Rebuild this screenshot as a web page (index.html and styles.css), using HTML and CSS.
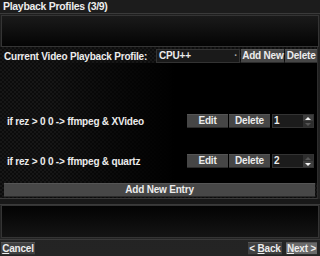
FILE: index.html
```html
<!DOCTYPE html>
<html lang="en">
<head>
    <meta charset="UTF-8">
    <title>Playback Profiles</title>
    <link rel="stylesheet" href="styles.css">
</head>
<body>
    <div class="screen">
        <div class="title">Playback Profiles (3/9)</div>
        <div class="panel"></div>

        <div class="main">
            <div class="profile-row">
                <span class="label">Current Video Playback Profile:</span>
                <div class="combo"><span>CPU++</span><span class="combo-dot">·</span></div>
                <button class="btn add-new">Add New</button>
                <button class="btn del-profile">Delete</button>
            </div>

            <div class="list">
                <div class="entry">
                    <span class="entry-text">if rez &gt; 0 0 -&gt; ffmpeg &amp; XVideo</span>
                    <button class="btn edit">Edit</button>
                    <button class="btn del">Delete</button>
                    <div class="spin">
                        <span class="spin-val">1</span>
                        <div class="arrows">
                            <span class="arrow up on"></span>
                            <span class="arrow down"></span>
                        </div>
                    </div>
                </div>
                <div class="entry">
                    <span class="entry-text">if rez &gt; 0 0 -&gt; ffmpeg &amp; quartz</span>
                    <button class="btn edit">Edit</button>
                    <button class="btn del">Delete</button>
                    <div class="spin">
                        <span class="spin-val">2</span>
                        <div class="arrows">
                            <span class="arrow up"></span>
                            <span class="arrow down on"></span>
                        </div>
                    </div>
                </div>
            </div>

            <button class="btn add-entry">Add New Entry</button>
        </div>

        <div class="spacer"></div>
        <div class="panel bottom"></div>

        <div class="footer">
            <button class="btn cancel"><u>C</u>ancel</button>
            <div class="nav">
                <button class="btn back">&lt; <u>B</u>ack</button>
                <button class="btn next"><u>N</u>ext &gt;</button>
            </div>
        </div>
    </div>
</body>
</html>
```

FILE: styles.css
```css
body {
    margin: 0;
    background-color: #1c1c1c;
    font-family: "Liberation Sans", Arial, sans-serif;
    font-weight: bold;
    font-size: 10px;
    letter-spacing: -0.2px;
    color: #ececec;
    white-space: nowrap;
}
.screen {
    width: 320px;
    height: 256px;
    overflow: hidden;
    display: flex;
    flex-direction: column;
    background: linear-gradient(#1e1e1e, #242424);
}
.title {
    height: 13px;
    line-height: 13px;
    font-size: 10.5px;
    letter-spacing: -0.3px;
    padding-left: 3px;
    border-bottom: 1px solid #3a3a3a;
    background-color: #1c1c1c;
}
.panel {
    height: 30px;
    margin: 1px 1px 0 1px;
    border: 1px solid #343434;
    background: linear-gradient(#1a1a1a, #040404);
}
.main {
    height: 151px;
    display: flex;
    flex-direction: column;
    border-bottom: 1px solid #3a3a3a;
    border-right: 1px solid #2e2e2e;
    margin-right: 2px;
    background-color: #0f0f0f;
    background-image: repeating-conic-gradient(#171717 0 25%, #0c0c0c 0 50%);
    background-size: 4px 4px;
}
.profile-row {
    display: flex;
    align-items: center;
    height: 14px;
    margin-top: 2px;
}
.label {
    width: 152px;
    flex-shrink: 0;
    padding-left: 4px;
}
.combo {
    width: 81px;
    height: 12px;
    line-height: 12px;
    border: 1px solid #333;
    background-color: #1a1a1a;
    display: flex;
    justify-content: space-between;
    padding-left: 2px;
    margin-right: 1px;
}
.combo-dot {
    color: #aaa;
    padding-right: 2px;
}
.btn {
    font-family: "Liberation Sans", Arial, sans-serif;
    font-weight: bold;
    font-size: 10px;
    letter-spacing: -0.2px;
    color: #ececec;
    background-color: #464646;
    border: none;
    border-top: 1px solid #555;
    border-bottom: 1px solid #2c2c2c;
    padding: 0;
    height: 14px;
    line-height: 12px;
    white-space: nowrap;
}
.add-new {
    width: 43px;
    margin-right: 1px;
}
.del-profile {
    width: 32px;
}
.list {
    flex: 1;
    display: flex;
    flex-direction: column;
    gap: 26px;
    padding-top: 51px;
    background: linear-gradient(to right, transparent 15%, #000 55%);
}
.entry {
    display: flex;
    align-items: center;
    height: 14px;
}
.entry-text {
    width: 180px;
    flex-shrink: 0;
    padding-left: 7px;
}
.edit {
    width: 41px;
    margin-right: 1px;
}
.del {
    width: 41px;
    margin-right: 2px;
}
.spin {
    width: 40px;
    height: 12px;
    border: 1px solid #333;
    background-color: #1c1c1c;
    display: flex;
    justify-content: space-between;
}
.spin-val {
    padding-left: 1px;
    line-height: 12px;
}
.arrows {
    width: 10px;
    display: flex;
    flex-direction: column;
}
.arrow {
    height: 6px;
    display: flex;
    justify-content: center;
    align-items: center;
    background-color: #2e2e2e;
}
.arrow::before {
    content: "";
    border-left: 3px solid transparent;
    border-right: 3px solid transparent;
}
.arrow.up::before {
    border-bottom: 3px solid #555;
}
.arrow.down::before {
    border-top: 3px solid #555;
}
.arrow.on {
    background-color: #3e3e3e;
}
.arrow.up.on::before {
    border-bottom-color: #f4f4f4;
}
.arrow.down.on::before {
    border-top-color: #f4f4f4;
}
.add-entry {
    margin: 0 2px 1px 4px;
    background-color: #474747;
}
.spacer {
    height: 5px;
    border-bottom: 1px solid #3a3a3a;
    background-color: #181818;
}
.panel.bottom {
    margin-top: 0;
    height: 31px;
    background: linear-gradient(#030303, #141414);
}
.footer {
    flex: 1;
    display: flex;
    justify-content: space-between;
    align-items: center;
    border-top: 1px solid #3a3a3a;
    margin-top: 1px;
    padding: 0 3px 0 1px;
}
.footer .btn {
    height: 13px;
    background-color: #404040;
}
.cancel {
    width: 34px;
}
.back {
    width: 34px;
}
.nav {
    display: flex;
    gap: 4px;
}
.footer .btn.next {
    width: 31px;
    background-color: #6a6a6a;
}
```
